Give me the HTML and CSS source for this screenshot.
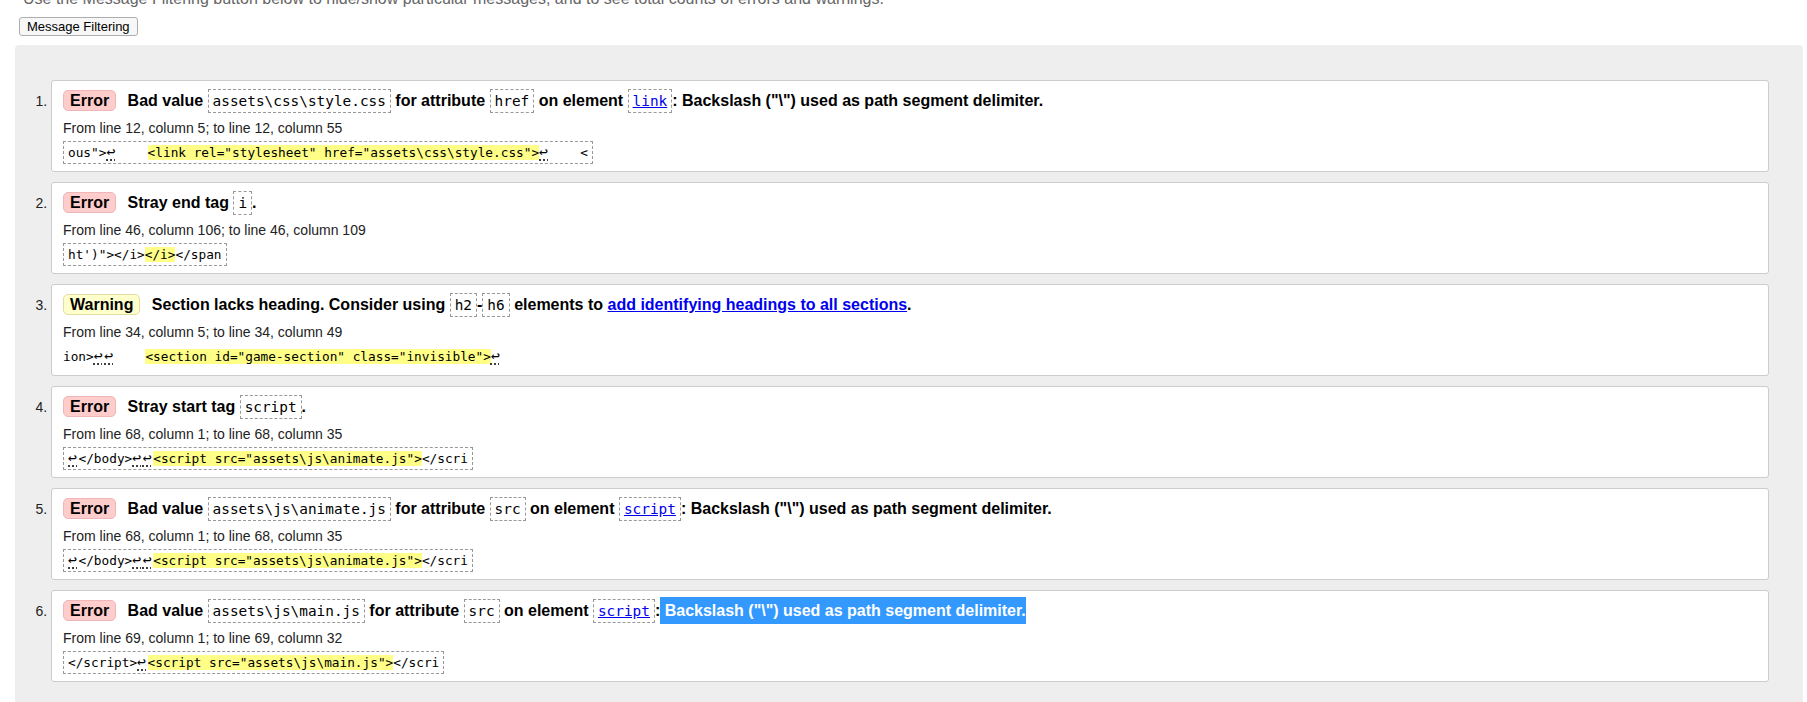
FILE: index.html
```html
<!DOCTYPE html>
<html lang="en">
<head>
<meta charset="utf-8">
<title>Nu Html Checker results</title>
<link rel="stylesheet" href="styles.css">
</head>
<body>
<div class="page">
  <p class="intro">Use the Message Filtering button below to hide/show particular messages, and to see total counts of errors and warnings.</p>
  <button class="filter-btn" type="button">Message Filtering</button>
  <div class="results">
    <ol class="messages">
      <li class="msg error">
        <p class="title"><strong class="badge">Error</strong> <span>Bad value <code>assets\css\style.css</code> for attribute <code>href</code> on element <a href="#"><code>link</code></a>: Backslash ("\") used as path segment delimiter.</span></p>
        <p class="location">From line 12, column 5; to line 12, column 55</p>
        <div class="extract-wrap"><code class="extract">ous"&gt;<b class="lf" title="Line break">↩</b>    <b class="hl">&lt;link rel="stylesheet" href="assets\css\style.css"&gt;</b><b class="lf" title="Line break">↩</b>    &lt;</code></div>
      </li>
      <li class="msg error">
        <p class="title"><strong class="badge">Error</strong> <span>Stray end tag <code>i</code>.</span></p>
        <p class="location">From line 46, column 106; to line 46, column 109</p>
        <div class="extract-wrap"><code class="extract">ht')"&gt;&lt;/i&gt;<b class="hl">&lt;/i&gt;</b>&lt;/span</code></div>
      </li>
      <li class="msg warning">
        <p class="title"><strong class="badge">Warning</strong> <span>Section lacks heading. Consider using <code>h2</code>-<code>h6</code> elements to <a href="#">add identifying headings to all sections</a>.</span></p>
        <p class="location">From line 34, column 5; to line 34, column 49</p>
        <div class="extract-wrap"><code class="extract plain">ion&gt;<b class="lf" title="Line break">↩</b><b class="lf" title="Line break">↩</b>    <b class="hl">&lt;section id="game-section" class="invisible"&gt;</b><b class="lf" title="Line break">↩</b></code></div>
      </li>
      <li class="msg error">
        <p class="title"><strong class="badge">Error</strong> <span>Stray start tag <code>script</code>.</span></p>
        <p class="location">From line 68, column 1; to line 68, column 35</p>
        <div class="extract-wrap"><code class="extract"><b class="lf" title="Line break">↩</b>&lt;/body&gt;<b class="lf" title="Line break">↩</b><b class="lf" title="Line break">↩</b><b class="hl">&lt;script src="assets\js\animate.js"&gt;</b>&lt;/scri</code></div>
      </li>
      <li class="msg error">
        <p class="title"><strong class="badge">Error</strong> <span>Bad value <code>assets\js\animate.js</code> for attribute <code>src</code> on element <a href="#"><code>script</code></a>: Backslash ("\") used as path segment delimiter.</span></p>
        <p class="location">From line 68, column 1; to line 68, column 35</p>
        <div class="extract-wrap"><code class="extract"><b class="lf" title="Line break">↩</b>&lt;/body&gt;<b class="lf" title="Line break">↩</b><b class="lf" title="Line break">↩</b><b class="hl">&lt;script src="assets\js\animate.js"&gt;</b>&lt;/scri</code></div>
      </li>
      <li class="msg error">
        <p class="title"><strong class="badge">Error</strong> <span>Bad value <code>assets\js\main.js</code> for attribute <code>src</code> on element <a href="#"><code>script</code></a>:<span class="sel"> Backslash ("\") used as path segment delimiter.</span></span></p>
        <p class="location">From line 69, column 1; to line 69, column 32</p>
        <div class="extract-wrap"><code class="extract">&lt;/script&gt;<b class="lf" title="Line break">↩</b><b class="hl">&lt;script src="assets\js\main.js"&gt;</b>&lt;/scri</code></div>
      </li>
    </ol>
  </div>
</div>
</body>
</html>
```

FILE: styles.css
```css
html, body {
  margin: 0;
  padding: 0;
  overflow: hidden;
  background: #fff;
}

body {
  font-family: "Liberation Sans", Arial, sans-serif;
  color: #000;
}

.page {
  padding: 0 4px 0 15px;
}

.intro {
  margin: -10px 0 0 8px;
  font-size: 16px;
  line-height: 18px;
  color: #666;
  white-space: nowrap;
}

.filter-btn {
  display: block;
  margin: 9px 0 0 4px;
  height: 19px;
  padding: 0 7px;
  font-family: "Liberation Sans", Arial, sans-serif;
  font-size: 13px;
  line-height: 17px;
  color: #000;
  background: #f7f7f7;
  border: 1px solid #adadad;
  border-radius: 3px;
}

.results {
  margin-top: 9px;
  background: #eee;
  border-radius: 4px 4px 0 0;
  padding: 35px 34px 40px 36px;
}

.messages {
  margin: 0;
  padding: 0;
  list-style: decimal outside;
  font-size: 14px;
}

.msg {
  background: #fff;
  border: 1px solid #ccc;
  border-radius: 3px;
  padding: 6px 11px 7px;
  margin-bottom: 10px;
}

.msg::marker {
  color: #222;
}

.title {
  margin: 0;
  font-size: 16px;
  font-weight: bold;
  line-height: 28px;
  white-space: nowrap;
}

.badge {
  display: inline-block;
  line-height: 19px;
  padding: 0 6px;
  border: 1px solid;
  border-radius: 5px;
  margin-right: 7px;
}

.error .badge {
  background: #fcc;
  border-color: #eeb6b6;
}

.warning .badge {
  background: #ffc;
  border-color: #e2dba2;
}

.title code {
  font-family: "DejaVu Sans Mono", "Liberation Mono", monospace;
  font-size: 14.4px;
  font-weight: normal;
  padding: 3px 4px;
  border: 1px dashed #999;
}

.title a {
  color: #00e;
}

.sel {
  background: #3399ff;
  color: #fff;
  padding: 5px 0;
}

.location {
  margin: 4px 0 0;
  font-size: 14px;
  line-height: 18px;
  color: #222;
}

.extract-wrap {
  display: flex;
  margin-top: 4px;
}

.extract {
  display: block;
  white-space: pre;
  font-family: "DejaVu Sans Mono", "Liberation Mono", monospace;
  font-size: 12.75px;
  line-height: 17px;
  padding: 2px 4px;
  border: 1px dashed #999;
  color: #000;
}

.extract.plain {
  border: none;
  padding: 3px 0;
}

.extract b {
  font-weight: normal;
}

.hl {
  background: #ff8;
}

.lf {
  display: inline-block;
  width: 10.5px;
  font-size: 15px;
  line-height: 14px;
  text-decoration: underline dotted #000;
  text-underline-offset: 3px;
}
```
